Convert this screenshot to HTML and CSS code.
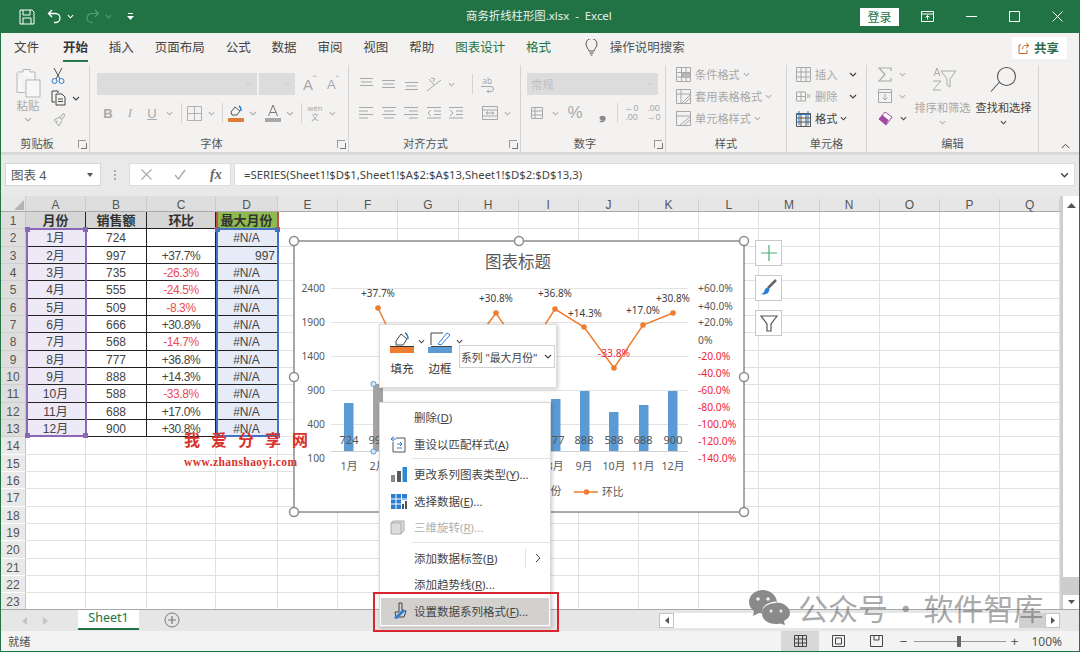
FILE: index.html
```html
<!DOCTYPE html>
<html>
<head>
  <meta charset="utf-8">
  <title>商务折线柱形图.xlsx - Excel</title>
  <link rel="stylesheet" href="styles.css">
</head>
<body>
<svg class="sprite" aria-hidden="true">
  <symbol id="car" viewBox="0 0 8 5"><path d="M1 1l3 3 3-3" fill="none" stroke="currentColor" stroke-width="1.2"/></symbol>
  <symbol id="lines-l" viewBox="0 0 16 14"><path d="M1 1.5h14M1 5h9M1 8.5h14M1 12h9" stroke="currentColor" fill="none"/></symbol>
  <symbol id="lines-c" viewBox="0 0 16 14"><path d="M1 1.5h14M3 5h10M1 8.5h14M3 12h10" stroke="currentColor" fill="none"/></symbol>
  <symbol id="lines-r" viewBox="0 0 16 14"><path d="M1 1.5h14M6 5h9M1 8.5h14M6 12h9" stroke="currentColor" fill="none"/></symbol>
</svg>

<div class="window">
  <header class="titlebar">
    <div class="qat">
      <svg class="q-save" width="16" height="16" viewBox="0 0 16 16" fill="none" stroke="#fff"><path d="M1 1h12l2 2v12H1zM4 1v5h7V1M4 15v-6h8v6"/></svg>
      <svg class="q-undo" width="15" height="15" viewBox="0 0 15 15" fill="none" stroke="#fff" stroke-width="1.3"><path d="M5 1L1.5 4.5 5 8M2 4.5h6.5a4.5 4.5 0 0 1 0 9H7"/></svg>
      <svg class="q-car" width="7" height="5"><use href="#car"/></svg>
      <svg class="q-redo" width="15" height="15" viewBox="0 0 15 15" fill="none" stroke="#5c9a78" stroke-width="1.2"><path d="M10 1l3.5 3.5L10 8M13 4.500H6.500a4.500 4.500 0 0 0 0 9H8"/></svg>
      <svg class="q-car dim" width="7" height="5"><use href="#car"/></svg>
      <svg class="q-more" width="7" height="8" viewBox="0 0 7 8" fill="#fff"><path d="M1 0h5v1H1zM0 3h7L3.500 7z"/></svg>
    </div>
    <div class="doc-title">商务折线柱形图.xlsx&nbsp; - &nbsp;Excel</div>
    <button class="login">登录</button>
    <div class="win-btns">
      <svg width="13" height="11" viewBox="0 0 13 11" fill="none" stroke="#fff"><path d="M.5.500h12v10H.500zM.5 3h12M6.500 8.500V4.500M4.500 6.500l2-2 2 2"/></svg>
      <svg width="11" height="11" viewBox="0 0 11 11" stroke="#fff"><path d="M0 5.500h11"/></svg>
      <svg width="11" height="11" viewBox="0 0 11 11" fill="none" stroke="#fff"><path d="M.5.500h10v10H.500z"/></svg>
      <svg width="11" height="11" viewBox="0 0 11 11" stroke="#fff"><path d="M.5.500l10 10M10.500.500l-10 10"/></svg>
    </div>
  </header>

  <nav class="tabs">
    <a>文件</a>
    <a class="on">开始</a>
    <a>插入</a>
    <a>页面布局</a>
    <a>公式</a>
    <a>数据</a>
    <a>审阅</a>
    <a>视图</a>
    <a>帮助</a>
    <a class="ctx">图表设计</a>
    <a class="ctx">格式</a>
    <svg class="bulb" width="13" height="17" viewBox="0 0 13 17" fill="none" stroke="#555"><path d="M4 12c0-2-3-3.500-3-7a5.500 5.500 0 0 1 11 0c0 3.500-3 5-3 7zM4.500 14h4M5.500 16h2"/></svg>
    <a class="tell">操作说明搜索</a>
    <button class="share">
      <svg width="12" height="12" viewBox="0 0 12 12" fill="none" stroke="#c0692c"><path d="M8 .8l3 2.700-3 2.700M11 3.500H7.500C5.500 3.500 4.500 5 4.500 7M3 3H1v8.500h8V8"/></svg>
      共享
    </button>
  </nav>

  <section class="ribbon">
    <div class="group g-clip">
      <div class="g-body clip">
        <div class="paste">
          <svg width="28" height="30" viewBox="0 0 28 30" fill="none" stroke="#b5b5b5"><path d="M4 4h5V1.500h7V4h5v8M3 4.500v20h8M12 12h14v17H12z" fill="#f7f7f7"/></svg>
          <span>粘贴</span>
          <svg class="car" width="8" height="5"><use href="#car"/></svg>
        </div>
        <div class="clip-tools">
          <svg width="14" height="18" viewBox="0 0 14 18" fill="none"><path d="M3 1l6 11M11 1L5 12" stroke="#555"/><circle cx="3.500" cy="14" r="2.500" stroke="#2b7cd3"/><circle cx="10.500" cy="14" r="2.500" stroke="#2b7cd3"/></svg>
          <div class="clip-copy">
            <svg width="16" height="16" viewBox="0 0 16 16" fill="none" stroke="#444"><path d="M4 12H1V1h6v2M5 4h6l3 3v8H5zM7 9h5M7 11.500h5"/></svg>
            <svg class="car dark" width="8" height="5"><use href="#car"/></svg>
          </div>
          <svg width="16" height="16" viewBox="0 0 16 16" fill="none" stroke="#a8a8a8"><path d="M9 7l3-4.500 2 1.500-3 4.500zM9 6L3 9l5 6 3-5.500M5 11l2-1"/></svg>
        </div>
      </div>
      <div class="g-label">剪贴板<i class="launch"></i></div>
    </div>

    <div class="group g-font">
      <div class="g-body">
        <div class="r1">
          <div class="combo c-name"><svg class="car" width="6" height="4"><use href="#car"/></svg></div>
          <div class="combo c-size"><svg class="car" width="6" height="4"><use href="#car"/></svg></div>
          <span class="bigA">A<sup>ˆ</sup></span>
          <span class="bigA small">A<sup>ˇ</sup></span>
        </div>
        <div class="r2">
          <span class="b">B</span><span class="b ital">I</span><span class="b und">U</span>
          <span class="cw"><svg class="car" width="7" height="5"><use href="#car"/></svg></span>
          <i class="sep"></i>
          <span class="b"><svg width="15" height="15" viewBox="0 0 15 15" fill="none" stroke="#b0b0b0"><path d="M.5.500h14v14H.500zM7.500 1v13M1 7.500h13" /></svg></span>
          <span class="cw"><svg class="car" width="7" height="5"><use href="#car"/></svg></span>
          <i class="sep s2"></i>
          <span class="b b-fill"><svg width="16" height="18" viewBox="0 0 16 18" fill="none"><path d="M3 8l4-5 5 4-3 4H4z" stroke="#555"/><path d="M11 2c2 1 2 3 2 5" stroke="#2b7cd3" stroke-width="1.500"/><path d="M0 14h16v4H0z" fill="#e07b33"/></svg></span>
          <span class="cw dark"><svg class="car" width="8" height="5"><use href="#car"/></svg></span>
          <span class="b b-col"><svg width="16" height="18" viewBox="0 0 16 18" fill="none"><path d="M3.500 12L8 1l4.500 11M5 8.500h6" stroke="#777"/><path d="M0 14h16v4H0z" fill="#a8a8a8"/></svg></span>
          <span class="cw dark"><svg class="car" width="8" height="5"><use href="#car"/></svg></span>
          <i class="sep s3"></i>
          <span class="b b-wen"><small>wén</small><small>文</small></span>
          <span class="cw"><svg class="car" width="7" height="5"><use href="#car"/></svg></span>
        </div>
      </div>
      <div class="g-label">字体<i class="launch"></i></div>
    </div>

    <div class="group g-align">
      <div class="g-body">
        <div class="r1">
          <span class="al"><svg width="15" height="14" viewBox="0 0 15 14" stroke="currentColor"><path d="M1 1.500h13M2 5h11M1 8.500h13"/></svg></span>
          <span class="al"><svg width="15" height="14" viewBox="0 0 15 14" stroke="currentColor"><path d="M1 3.500h13M2 7h11M1 10.500h13"/></svg></span>
          <span class="al"><svg width="15" height="14" viewBox="0 0 15 14" stroke="currentColor"><path d="M1 5.500h13M2 9h11M1 12.500h13"/></svg></span>
          <span class="al"><svg width="16" height="15" viewBox="0 0 16 15" fill="none" stroke="currentColor"><path d="M1 14L15 3M3 2l5 6M5 1l4 1-2 3"/></svg></span>
          <span class="cw"><svg class="car" width="7" height="5"><use href="#car"/></svg></span>
          <i class="sep s-a"></i>
          <span class="al wrap"><small>ab</small><svg width="15" height="8" viewBox="0 0 15 8" fill="none" stroke="currentColor"><path d="M1 1.500h10a2.500 2.500 0 0 1 0 5H7M9 4.500L7 6.500l2 1.500"/></svg></span>
        </div>
        <div class="r2">
          <span class="al"><svg width="16" height="14"><use href="#lines-l"/></svg></span>
          <span class="al"><svg width="16" height="14"><use href="#lines-c"/></svg></span>
          <span class="al"><svg width="16" height="14"><use href="#lines-r"/></svg></span>
          <span class="al"><svg width="16" height="14" viewBox="0 0 16 14" fill="none" stroke="currentColor"><path d="M1 1.500h14M8 5h7M8 8.500h7M1 12h14M5 4L2 7l3 3"/></svg></span>
          <span class="al"><svg width="16" height="14" viewBox="0 0 16 14" fill="none" stroke="currentColor"><path d="M1 1.500h14M8 5h7M8 8.500h7M1 12h14M2 4l3 3-3 3"/></svg></span>
          <i class="sep s-a2"></i>
          <span class="al"><svg width="16" height="14" viewBox="0 0 16 14" fill="none" stroke="currentColor"><path d="M.5.500h15v13H.500zM1 4h14M1 10h14M4 7h8M6 5.500L4 7l2 1.500M10 5.500L12 7l-2 1.500"/></svg></span>
          <span class="cw"><svg class="car" width="7" height="5"><use href="#car"/></svg></span>
        </div>
      </div>
      <div class="g-label">对齐方式<i class="launch"></i></div>
    </div>

    <div class="group g-num">
      <div class="g-body">
        <div class="r1"><div class="combo c-num">常规<svg class="car" width="6" height="4"><use href="#car"/></svg></div></div>
        <div class="r2">
          <span class="al"><svg width="15" height="14" viewBox="0 0 15 14" fill="none" stroke="currentColor"><path d="M.5 1.500h11v11H.500zM1 5h10M1 9h10M4 1v11"/></svg></span>
          <span class="cw"><svg class="car" width="7" height="5"><use href="#car"/></svg></span>
          <span class="pct">%</span>
          <span class="comma">❟</span>
          <i class="sep s-n"></i>
          <span class="dec"><em>←0</em><em>.00</em></span>
          <span class="dec"><em>.00</em><em>→0</em></span>
        </div>
      </div>
      <div class="g-label">数字<i class="launch"></i></div>
    </div>

    <div class="group g-style">
      <div class="g-body stack">
        <div class="row3"><svg width="15" height="15" viewBox="0 0 15 15" fill="none" stroke="#a8a8a8"><path d="M.5.500h14v14H.500zM.5 5.500h14M.5 10h14M5.500 1v13M10 1v13"/><path d="M6 6h8v4H6z" fill="#bbb"/></svg><span>条件格式</span><svg class="car" width="7" height="5"><use href="#car"/></svg></div>
        <div class="row3"><svg width="15" height="15" viewBox="0 0 15 15" fill="none" stroke="#a8a8a8"><path d="M.5.500h14v14H.500zM.5 5h14M5 1v13M6 14l8-8M9 14l5-5"/></svg><span>套用表格格式</span><svg class="car" width="7" height="5"><use href="#car"/></svg></div>
        <div class="row3"><svg width="15" height="15" viewBox="0 0 15 15" fill="none" stroke="#a8a8a8"><path d="M.5.500h14v14H.500zM.5 5h14M4 14L14 6M8 14l6-5"/></svg><span>单元格样式</span><svg class="car" width="7" height="5"><use href="#car"/></svg></div>
      </div>
      <div class="g-label">样式</div>
    </div>

    <div class="group g-cells">
      <div class="g-body stack">
        <div class="row3"><svg width="15" height="15" viewBox="0 0 15 15" fill="none" stroke="#a8a8a8"><path d="M.5.500h14v14H.500zM.5 5h14M.5 10h14M5 1v13M10 1v13"/></svg><span>插入</span><svg class="car dark push" width="8" height="5"><use href="#car"/></svg></div>
        <div class="row3"><svg width="15" height="15" viewBox="0 0 15 15" fill="none" stroke="#a8a8a8"><path d="M.5 3h9v9h-9zM.5 7.500h9M5 3v9M11 5l3 4M14 5l-3 4"/></svg><span>删除</span><svg class="car dark push" width="8" height="5"><use href="#car"/></svg></div>
        <div class="row3 live"><svg width="15" height="17" viewBox="0 0 15 17" fill="none" stroke="#555"><path d="M.5 3.500h14v13H.500zM.5 8h14M.5 12h14M5 3v13M10 3v13"/><path d="M3 1v14M12 1v14M1 4.500h13" stroke="#2b7cd3"/></svg><span>格式</span><svg class="car dark" width="7" height="5"><use href="#car"/></svg></div>
      </div>
      <div class="g-label">单元格</div>
    </div>

    <div class="group g-edit">
      <div class="g-body edit">
        <div class="edit-col">
          <div class="edit-i"><svg width="14" height="15" viewBox="0 0 14 15" fill="none" stroke="#a8a8a8" stroke-width="1.200"><path d="M13 4V1H1l6 6.500L1 14h12v-3"/></svg><svg class="car" width="7" height="5"><use href="#car"/></svg></div>
          <div class="edit-i"><svg width="14" height="14" viewBox="0 0 14 14" fill="none" stroke="#a8a8a8"><path d="M.5.500h13v13H.500zM1 3.500h12M7 5v6M4.500 8.500L7 11l2.500-2.500"/></svg><svg class="car" width="7" height="5"><use href="#car"/></svg></div>
          <div class="edit-i"><svg width="15" height="15" viewBox="0 0 15 15"><path d="M1 8l6-7 7 5-6 8z" fill="#fff" stroke="#a349a4"/><path d="M1 8l3.500-4 6 5L8 14z" fill="#a349a4"/></svg><svg class="car dark" width="7" height="5"><use href="#car"/></svg></div>
        </div>
        <div class="big dim">
          <svg width="28" height="28" viewBox="0 0 28 28" fill="none" stroke="#aaa"><path d="M5 11L8 3l3 8M6 8.500h4M4 16h8l-8 9h8M12 6h15l-6 8v8l-3-2v-6z"/></svg>
          <span>排序和筛选</span>
          <svg class="car" width="7" height="5"><use href="#car"/></svg>
        </div>
        <div class="big">
          <svg width="28" height="28" viewBox="0 0 28 28" fill="none" stroke="#555" stroke-width="1.100"><circle cx="16.500" cy="11.500" r="9"/><path d="M9.500 17L1 26.500"/></svg>
          <span>查找和选择</span>
          <svg class="car dark" width="7" height="5"><use href="#car"/></svg>
        </div>
      </div>
      <div class="g-label">编辑</div>
    </div>
    <svg class="collapse" width="9" height="6" viewBox="0 0 9 6" fill="none" stroke="#444"><path d="M.8 5l3.700-3.700L8.200 5"/></svg>
  </section>

  <div class="formula">
    <div class="namebox">图表 4<svg width="6" height="4" viewBox="0 0 6 4" fill="#555"><path d="M0 0h6L3 4z"/></svg></div>
    <div class="dots"></div>
    <div class="fbtns">
      <svg width="11" height="11" viewBox="0 0 11 11" stroke="#aaa" stroke-width="1.200"><path d="M.5.500l10 10M10.500.500l-10 10"/></svg>
      <svg width="12" height="11" viewBox="0 0 12 11" fill="none" stroke="#aaa" stroke-width="1.400"><path d="M1 6l3.500 4L11 1"/></svg>
      <em class="fx">fx</em>
    </div>
    <div class="finput">=SERIES(Sheet1!$D$1,Sheet1!$A$2:$A$13,Sheet1!$D$2:$D$13,3)<svg width="9" height="6"><use href="#car"/></svg></div>
  </div>

  <div class="sheet">
    <table class="cells">
      <colgroup><col class="w-h"><col class="w-a"><col class="w-b"><col class="w-c"><col class="w-d"></colgroup>
      <thead><tr><th class="corner"><i></i></th><th>A</th><th>B</th><th>C</th><th>D</th></tr></thead>
      <tbody>
        <tr class="hd"><th>1</th><td>月份</td><td>销售额</td><td>环比</td><td class="max">最大月份</td></tr>
        <tr class="d"><th>2</th><td class="a">1月</td><td>724</td><td></td><td class="e">#N/A</td></tr>
        <tr class="d"><th>3</th><td class="a">2月</td><td>997</td><td>+37.7%</td><td class="e rt">997</td></tr>
        <tr class="d"><th>4</th><td class="a">3月</td><td>735</td><td class="neg">-26.3%</td><td class="e">#N/A</td></tr>
        <tr class="d"><th>5</th><td class="a">4月</td><td>555</td><td class="neg">-24.5%</td><td class="e">#N/A</td></tr>
        <tr class="d"><th>6</th><td class="a">5月</td><td>509</td><td class="neg">-8.3%</td><td class="e">#N/A</td></tr>
        <tr class="d"><th>7</th><td class="a">6月</td><td>666</td><td>+30.8%</td><td class="e">#N/A</td></tr>
        <tr class="d"><th>8</th><td class="a">7月</td><td>568</td><td class="neg">-14.7%</td><td class="e">#N/A</td></tr>
        <tr class="d"><th>9</th><td class="a">8月</td><td>777</td><td>+36.8%</td><td class="e">#N/A</td></tr>
        <tr class="d"><th>10</th><td class="a">9月</td><td>888</td><td>+14.3%</td><td class="e">#N/A</td></tr>
        <tr class="d"><th>11</th><td class="a">10月</td><td>588</td><td class="neg">-33.8%</td><td class="e">#N/A</td></tr>
        <tr class="d"><th>12</th><td class="a">11月</td><td>688</td><td>+17.0%</td><td class="e">#N/A</td></tr>
        <tr class="d"><th>13</th><td class="a">12月</td><td>900</td><td>+30.8%</td><td class="e">#N/A</td></tr>
        <tr class="x"><th>14</th><td></td><td></td><td></td><td></td></tr>
        <tr class="x"><th>15</th><td></td><td></td><td></td><td></td></tr>
        <tr class="x"><th>16</th><td></td><td></td><td></td><td></td></tr>
        <tr class="x"><th>17</th><td></td><td></td><td></td><td></td></tr>
        <tr class="x"><th>18</th><td></td><td></td><td></td><td></td></tr>
        <tr class="x"><th>19</th><td></td><td></td><td></td><td></td></tr>
        <tr class="x"><th>20</th><td></td><td></td><td></td><td></td></tr>
        <tr class="x"><th>21</th><td></td><td></td><td></td><td></td></tr>
        <tr class="x"><th>22</th><td></td><td></td><td></td><td></td></tr>
        <tr class="x"><th>23</th><td></td><td></td><td></td><td></td></tr>
      </tbody>
    </table>
    <div class="blank">
      <div class="col-heads"><span>E</span><span>F</span><span>G</span><span>H</span><span>I</span><span>J</span><span>K</span><span>L</span><span>M</span><span>N</span><span>O</span><span>P</span><span>Q</span></div>
      <div class="blank-grid"></div>
    </div>
    <div class="vscroll">
      <div class="vs-up"><svg width="9" height="5" viewBox="0 0 9 5" fill="#555"><path d="M0 5h9L4.500 0z"/></svg></div>
      <div class="vs-thumb"></div>
      <div class="vs-down"><svg width="7" height="4" viewBox="0 0 7 4" fill="#555"><path d="M0 0h7L3.500 4z"/></svg></div>
    </div>
  </div>

  <div class="sheetbar">
    <div class="nav-arrows"><svg width="5" height="8" viewBox="0 0 5 8" fill="#c4c4c4"><path d="M5 0v8L0 4z"/></svg><svg width="5" height="8" viewBox="0 0 5 8" fill="#c4c4c4"><path d="M0 0v8l5-4z"/></svg></div>
    <div class="sheet-tab">Sheet1</div>
    <svg class="add" width="16" height="16" viewBox="0 0 16 16" fill="none" stroke="#777"><circle cx="8" cy="8" r="7"/><path d="M4 8h8M8 4v8" stroke-width="1.200"/></svg>
    <div class="hscroll">
      <span class="hs-left"><svg width="4" height="7" viewBox="0 0 4 7" fill="#555"><path d="M4 0v7L0 3.500z"/></svg></span>
      <span class="hs-thumb"></span>
      <span class="hs-rest"></span>
      <span class="hs-right"><svg width="4" height="7" viewBox="0 0 4 7" fill="#555"><path d="M0 0v7l4-3.500z"/></svg></span>
    </div>
  </div>

  <footer class="status">
    <span>就绪</span>
    <div class="views">
      <span class="on"><svg width="13" height="12" viewBox="0 0 13 12" fill="none" stroke="#444"><path d="M.5.500h12v11H.500zM.5 4h12M.5 8h12M4.500 1v10M8.500 1v10"/></svg></span>
      <span><svg width="13" height="12" viewBox="0 0 13 12" fill="none" stroke="#444"><path d="M.5.500h12v11H.500zM3.500 3h6v6h-6z"/></svg></span>
      <span><svg width="13" height="12" viewBox="0 0 13 12" fill="none" stroke="#444"><path d="M.5.500h12v11H.500zM4 1v4h5V1"/></svg></span>
    </div>
    <div class="zoom"><b>−</b><div class="track"><i></i></div><b>+</b><span>100%</span></div>
  </footer>

  <!-- range outlines sit on top of the cells -->
  <div class="range r-purple"><i class="tl"></i><i class="tr"></i><i class="bl"></i><i class="br"></i></div>
  <div class="range r-blue"><i class="tl"></i><i class="tr"></i><i class="bl"></i><i class="br"></i></div>
  <div class="range r-red"></div>

  <svg class="chart" width="450" height="271" viewBox="294 241 450 271">
    <rect x="294" y="241" width="450" height="271" fill="#fff" stroke="#8c8c8c" stroke-width="1.500"/>
    <text class="c-title" x="518" y="268" text-anchor="middle">图表标题</text>
    <g stroke="#e3e3e3">
      <path d="M331 288.500h357M331 322.500h357M331 356.500h357M331 390.500h357M331 424.500h357"/>
      <path d="M331 451.500h357" stroke="#d0d0d0"/>
    </g>
    <g class="c-ax" text-anchor="end">
      <text x="325" y="292">2400</text><text x="325" y="326">1900</text><text x="325" y="360">1400</text><text x="325" y="394">900</text><text x="325" y="428">400</text><text x="325" y="462">100</text>
    </g>
    <g class="c-ax">
      <text x="698" y="292">+60.0%</text><text x="698" y="310">+40.0%</text><text x="698" y="326">+20.0%</text><text x="698" y="344">0%</text>
      <g class="c-neg"><text x="698" y="360">-20.0%</text><text x="698" y="377">-40.0%</text><text x="698" y="394">-60.0%</text><text x="698" y="411">-80.0%</text><text x="698" y="428">-100.0%</text><text x="698" y="445">-120.0%</text><text x="698" y="462">-140.0%</text></g>
    </g>
    <g fill="#5b9bd5">
      <path d="M344 403h9.500v48H344zM403 403h9.500v48H403zM432 415h9.500v36H432zM462 418h9.500v33H462zM491 407h9.500v44H491zM520 413h9.500v38H520zM551 399h9.500v52H551zM580 391h9.500v60H580zM609 412h9.500v39H609zM639 405h9.500v46H639zM668 391h9.500v60H668z"/>
    </g>
    <path d="M373 384h10v67h-10z" fill="#a3a3a3"/>
    <circle cx="373.500" cy="384" r="2.600" fill="#d6e8f7" stroke="#5b9bd5"/>
    <circle cx="373.500" cy="451.500" r="2.600" fill="#d6e8f7" stroke="#5b9bd5"/>
    <g class="c-lab" text-anchor="middle">
      <text x="349" y="444">724</text><text x="378" y="444">997</text><text x="555" y="444">777</text><text x="584" y="444">888</text><text x="614" y="444">588</text><text x="643" y="444">688</text><text x="673" y="444">900</text>
    </g>
    <g class="c-cat" text-anchor="middle">
      <text x="349" y="470">1月</text><text x="378" y="470">2月</text><text x="555" y="470">8月</text><text x="584" y="470">9月</text><text x="614" y="470">10月</text><text x="643" y="470">11月</text><text x="673" y="470">12月</text>
    </g>
    <polyline points="378,308 408,370 437,362 467,352 496,313 525,356 555,309 584,327 614,368 643,325 673,313" fill="none" stroke="#ed7d31" stroke-width="1.500"/>
    <g fill="#ed7d31">
      <circle cx="378" cy="308" r="2.800"/><circle cx="496" cy="313" r="2.800"/><circle cx="555" cy="309" r="2.800"/><circle cx="584" cy="327" r="2.800"/><circle cx="614" cy="368" r="2.800"/><circle cx="643" cy="325" r="2.800"/><circle cx="673" cy="313" r="2.800"/>
    </g>
    <g class="c-ax dark" text-anchor="middle">
      <text x="378" y="297">+37.7%</text><text x="496" y="302">+30.8%</text><text x="555" y="297">+36.8%</text><text x="585" y="317">+14.3%</text><text x="643" y="314">+17.0%</text><text x="673" y="302">+30.8%</text>
    </g>
    <text class="c-ax c-neg" x="614" y="357" text-anchor="middle">-33.8%</text>
    <text class="c-cat" x="556" y="495" text-anchor="middle">份</text>
    <path d="M574 492h24" stroke="#ed7d31" stroke-width="1.500"/><circle cx="586.500" cy="492" r="2.800" fill="#ed7d31"/>
    <text class="c-cat" x="602" y="496">环比</text>
    <g fill="#fff" stroke="#8c8c8c" stroke-width="1.500">
      <circle cx="294" cy="241" r="4.500"/><circle cx="519" cy="241" r="4.500"/><circle cx="744" cy="241" r="4.500"/><circle cx="294" cy="377" r="4.500"/><circle cx="744" cy="377" r="4.500"/><circle cx="294" cy="512" r="4.500"/><circle cx="519" cy="512" r="4.500"/><circle cx="744" cy="512" r="4.500"/>
    </g>
  </svg>

  <div class="chart-btns">
    <span><svg width="16" height="16" viewBox="0 0 16 16" stroke="#4caf6d" stroke-width="1.200"><path d="M0 8h16M8 0v16"/></svg></span>
    <span><svg width="18" height="18" viewBox="0 0 18 18" fill="none"><path d="M8 9l8-8" stroke="#666" stroke-width="2.500"/><path d="M0 15c4 .5 4-3 5.500-5.500L8.500 8c2 3 .5 9-8.500 7z" fill="#2b7cd3"/></svg></span>
    <span><svg width="18" height="18" viewBox="0 0 18 18" fill="none" stroke="#555" stroke-width="1.200"><path d="M1 2h16l-6 8v7H7v-7z"/></svg></span>
  </div>

  <div class="minibar">
    <div class="mini-btn">
      <div class="mini-ic">
        <svg width="24" height="22" viewBox="0 0 24 22" fill="none"><path d="M6 10l5-7 6 5-4 6H6z" stroke="#444"/><path d="M15 2c2 1 3 3 3 6" stroke="#2b7cd3" stroke-width="1.500"/><path d="M0 15.500h24" stroke="#333"/><path d="M0 16h24v6H0z" fill="#ed7d31"/></svg>
        <svg class="car dark" width="7" height="5"><use href="#car"/></svg>
      </div>
      <span>填充</span>
    </div>
    <div class="mini-btn">
      <div class="mini-ic">
        <svg width="24" height="22" viewBox="0 0 24 22" fill="none"><path d="M3 14V2h12M3 15.500h21" stroke="#444"/><path d="M10 13l9-11 3 2-9 10z" stroke="#2b7cd3"/><path d="M0 16h24v6H0z" fill="#5b9bd5"/></svg>
        <svg class="car dark" width="7" height="5"><use href="#car"/></svg>
      </div>
      <span>边框</span>
    </div>
    <div class="series-sel">系列 "最大月份"<svg width="8" height="5"><use href="#car"/></svg></div>
  </div>

  <div class="menu">
    <div class="m-i"><span class="m-ic"></span><span>删除(<u>D</u>)</span></div>
    <div class="m-i">
      <span class="m-ic"><svg width="18" height="18" viewBox="0 0 18 18" fill="none" stroke="#555"><path d="M6 3h9v14H3V7"/><path d="M1 4h5M4 1.500L1 4l3 2.500M7 9l5 0M10 7l2 2-2 2M7 13h5" stroke="#2b7cd3"/></svg></span>
      <span>重设以匹配样式(<u>A</u>)</span>
    </div>
    <hr>
    <div class="m-i">
      <span class="m-ic"><svg width="18" height="18" viewBox="0 0 18 18"><path d="M1 10h4v7H1z" fill="#8a8a8a"/><path d="M7 6h4v11H7z" fill="#5a5a5a"/><path d="M12.500 2h4.500v15h-4.500z" fill="#2b8ad3"/></svg></span>
      <span>更改系列图表类型(<u>Y</u>)...</span>
    </div>
    <div class="m-i">
      <span class="m-ic"><svg width="18" height="18" viewBox="0 0 18 18"><path d="M1 2h16v15H1z" fill="#2b7cd3"/><path d="M1 7h16M1 12h16M6 2v15M11.500 2v15" stroke="#fff"/><path d="M12 8h5v9h-5z" fill="#fff"/><path d="M12 12h2v5h-2zM15 9h2v8h-2z" fill="#555"/></svg></span>
      <span>选择数据(<u>E</u>)...</span>
    </div>
    <div class="m-i off">
      <span class="m-ic"><svg width="15" height="15" viewBox="0 0 15 15" fill="#ddd" stroke="#aaa"><path d="M1 3h10v11H1zM1 3l2-2h11v10l-3 3"/></svg></span>
      <span>三维旋转(<u>R</u>)...</span>
    </div>
    <hr>
    <div class="m-i sub"><span class="m-ic"></span><span>添加数据标签(<u>B</u>)</span><i></i><svg width="6" height="10" viewBox="0 0 6 10" fill="none" stroke="#444"><path d="M1 1l4 4-4 4"/></svg></div>
    <div class="m-i"><span class="m-ic"></span><span>添加趋势线(<u>R</u>)...</span></div>
    <div class="m-i hot">
      <span class="m-ic"><svg width="18" height="18" viewBox="0 0 18 18" fill="none"><path d="M8 1v9l-4 0 1 5h8l2-6-4-1V1z" stroke="#444"/><path d="M3 16l9-9 2 2-8 8z" fill="#2b7cd3"/></svg></span>
      <span>设置数据系列格式(<u>F</u>)...</span>
    </div>
  </div>
  <div class="callout"></div>

  <div class="mark-red">
    <div class="mark-cn">我爱分享网</div>
    <div class="mark-url">www.zhanshaoyi.com</div>
  </div>

  <div class="mark-wx">
    <svg width="42" height="35" viewBox="0 0 42 35" fill="#8a8a8a"><path d="M14 0C6 0 0 5.500 0 12c0 4 2 7 5 9l-1 5 6-3c1 .3 2 .4 3 .5-1-6 5-12 15-12C27 5 21 0 14 0z"/><path d="M27 13c-8 0-14 4.500-14 10.500S19 34 27 34c2 0 3-.2 4-.5l5 1.500-1-4c4-2 6-5 6-8 0-5.500-6-10.500-14-10.500z"/><g fill="#eee"><circle cx="9" cy="9" r="1.800"/><circle cx="19" cy="9" r="1.800"/><circle cx="22" cy="21" r="1.500"/><circle cx="32" cy="21" r="1.500"/></g></svg>
    <span>公众号 · 软件智库</span>
  </div>
</div>
</body>
</html>
```

FILE: styles.css
```css
* {
  box-sizing: border-box;
}

html, body {
  margin: 0;
  height: 652px;
  overflow: hidden;
}

body {
  font-family: "Noto Sans", "Noto Sans CJK SC", sans-serif;
  font-size: 11.2px;
  color: #444;
}

.sprite {
  display: none;
}

svg {
  display: block;
  flex: none;
}

.window {
  position: relative;
  width: 1080px;
  height: 652px;
  background: #f3f2f1;
  border: 1px solid #217346;
  border-width: 0 1px 1px;
  overflow: hidden;
}

/* title bar */
.titlebar {
  height: 33px;
  background: #217346;
  color: #fff;
  display: flex;
  align-items: center;
  position: relative;
}

.qat {
  display: flex;
  align-items: center;
  padding-left: 18px;
}

.q-undo { margin-left: 12px; }
.q-car { margin-left: 5px; color: #fff; }
.q-car.dim { color: #5c9a78; }
.q-redo { margin-left: 11px; }
.q-more { margin-left: 15px; }

.doc-title {
  position: absolute;
  left: 465px;
  top: 8px;
  font-size: 11.4px;
  line-height: 16px;
  white-space: nowrap;
  color: #e8f1ec;
}

.login {
  margin-left: auto;
  width: 39px;
  height: 18px;
  padding: 0;
  border: 0;
  background: #fff;
  color: #217346;
  font: 12px "Noto Sans CJK SC", sans-serif;
}

.win-btns {
  display: flex;
  align-items: center;
  gap: 32px;
  margin-left: 22px;
  padding-right: 16px;
}

/* tabs */
.tabs {
  height: 29px;
  display: flex;
  align-items: center;
  gap: 20.9px;
  padding-left: 13px;
  font-size: 12.5px;
  color: #444;
  background: #f3f2f1;
}

.tabs a {
  position: relative;
  line-height: 26px;
  white-space: nowrap;
}

.tabs .on {
  font-weight: 700;
  color: #333;
  margin-left: 3px;
}

.tabs .on::after {
  content: "";
  position: absolute;
  left: 0;
  right: 0;
  bottom: -1px;
  height: 2px;
  background: #217346;
}

.tabs .ctx { color: #217346; }
.tabs .bulb { margin-left: 13px; }
.tabs .tell { margin-left: -9px; color: #555; }

.share {
  margin-left: auto;
  margin-right: 12px;
  width: 55px;
  height: 22px;
  padding: 0 0 0 6px;
  border: 0;
  background: #fff;
  color: #2f6b4e;
  display: flex;
  align-items: center;
  gap: 4px;
  font: 700 12.5px "Noto Sans CJK SC", sans-serif;
}

/* ribbon */
.ribbon {
  height: 91px;
  display: flex;
  padding-top: 3px;
  position: relative;
  background: #f3f2f1;
  color: #a8a8a8;
  border-bottom: 1px solid #d8d8d8;
  box-shadow: 0 1px 2px #ccc;
  z-index: 1;
}

.group {
  display: flex;
  flex-direction: column;
  border-right: 1px solid #d4d4d4;
  height: 87px;
}

.g-clip { width: 89px; }
.g-font { width: 259px; }
.g-align { width: 172px; }
.g-num { width: 145px; }
.g-style { width: 121px; }
.g-cells { width: 80px; }
.g-edit { width: 172px; }

.g-body {
  flex: 1;
  min-height: 0;
}

.g-label {
  height: 17px;
  line-height: 17px;
  text-align: center;
  color: #555;
  position: relative;
}

.g-clip .g-label { padding-right: 16px; }
.g-font .g-label { padding-right: 15px; }
.g-align .g-label { padding-right: 18px; }
.g-num .g-label { padding-right: 16px; }

.launch {
  position: absolute;
  right: 3px;
  top: 5px;
  width: 8px;
  height: 8px;
  border: 1px solid #999;
  border-width: 1px 0 0 1px;
}

.launch::after {
  content: "";
  position: absolute;
  left: 2px;
  top: 2px;
  width: 5px;
  height: 5px;
  border: 1px solid #777;
  border-width: 0 1px 1px 0;
}

.car {
  color: #b0b0b0;
}

.car.dark, .cw.dark {
  color: #444;
}

/* clipboard */
.clip {
  display: flex;
  padding: 3px 0 0 4px;
}

.paste {
  width: 46px;
  display: flex;
  flex-direction: column;
  align-items: center;
}

.paste span {
  line-height: 15px;
  font-size: 11.4px;
}

.paste .car {
  margin-top: 4px;
}

.clip-tools {
  display: flex;
  flex-direction: column;
  gap: 5px;
  margin-top: -1px;
}

.clip-copy {
  display: flex;
  align-items: center;
  gap: 5px;
}

/* rows shared by font, align and number */
.r1, .r2 {
  height: 22px;
  display: flex;
  align-items: center;
}

.r1 { margin-top: 8px; }
.r2 { margin-top: 7px; }

.g-font .r1, .g-font .r2 { padding-left: 7px; }
.g-align .r1, .g-align .r2 { padding-left: 6px; }
.g-num .r1, .g-num .r2 { padding-left: 6px; }

.combo {
  height: 22px;
  background: #dcdcdc;
  display: flex;
  align-items: center;
  justify-content: flex-end;
  padding-right: 5px;
}

.combo .car {
  color: #c4c4c4;
}

.c-name { width: 160px; }
.c-size { width: 36px; margin-left: 2px; }
.c-num {
  width: 131px;
  justify-content: space-between;
  padding-left: 4px;
  color: #c0c0c0;
}

.bigA {
  margin-left: 8px;
  font: 15px "Liberation Sans", sans-serif;
  width: 18px;
}

.bigA.small {
  font-size: 13px;
  margin-left: 6px;
}

.bigA sup {
  font-size: 10px;
  line-height: 0;
}

.b, .al {
  width: 22px;
  flex: none;
  display: flex;
  justify-content: center;
  align-items: center;
  font: 700 13px "Liberation Sans", sans-serif;
}

.al {
  width: 22.5px;
}

.ital {
  font: italic 13px "Liberation Serif", serif;
}

.und {
  font-weight: 400;
  text-decoration: underline;
}

.cw {
  width: 12px;
  flex: none;
  display: flex;
  justify-content: center;
}

.sep {
  width: 1px;
  height: 20px;
  background: #d4d4d4;
  margin: 0 1px 0 6px;
  flex: none;
}

.s2 { margin: 0 2px 0 5px; }
.s3 { margin: 0 2px 0 5px; }
.b-col { margin-left: 3px; }

.b-wen {
  flex-direction: column;
  font: 9px/9px "Noto Sans", "Noto Sans CJK SC", sans-serif;
}

.s-a { margin: 0 3px 0 15px; }
.s-a2 { margin: 0 3px 0 7px; height: 0; }

.wrap {
  flex-direction: column;
  font: 10px/9px "Noto Sans", sans-serif;
}

.pct {
  width: 24px;
  margin-left: 6px;
  font: 17px "Liberation Sans", sans-serif;
}

.comma {
  width: 22px;
  text-align: center;
  font: 700 18px "DejaVu Sans", sans-serif;
  color: #888;
}

.s-n { margin: 0 3px 0 3px; }

.dec {
  width: 22px;
  display: flex;
  flex-direction: column;
  align-items: center;
  font: 9px/9px "Liberation Sans", sans-serif;
}

.dec em {
  font-style: normal;
}

/* three row groups */
.stack {
  display: flex;
  flex-direction: column;
  padding: 0 10px;
  margin-top: -2px;
}

.row3 {
  height: 22px;
  display: flex;
  align-items: center;
  gap: 3px;
  white-space: nowrap;
}

.row3 span {
  margin-left: 1px;
}

.row3 .push {
  margin-left: auto;
}

.g-cells .stack {
  padding: 0 9px;
}

.row3.live {
  color: #444;
}

.row3.live .car {
  color: #444;
}

.edit {
  display: flex;
  padding-left: 11px;
  margin-top: -2px;
}

.edit-col {
  width: 34px;
  display: flex;
  flex-direction: column;
}

.edit-i {
  height: 22px;
  display: flex;
  align-items: center;
  gap: 7px;
}

.big {
  width: 61px;
  display: flex;
  flex-direction: column;
  align-items: center;
  color: #444;
  white-space: nowrap;
  padding-top: 2px;
}

.big.dim {
  color: #a8a8a8;
}

.big span {
  line-height: 16px;
  margin-top: 7px;
}

.big .car {
  margin-top: 4px;
}

.collapse {
  position: absolute;
  right: 9px;
  top: 81px;
}

/* formula bar */
.formula {
  height: 43px;
  display: flex;
  padding: 10px 4px;
  background: #e9e9e9;
  color: #555;
}

.namebox {
  width: 96px;
  background: #fff;
  border: 1px solid #d4d4d4;
  display: flex;
  justify-content: space-between;
  align-items: center;
  padding: 0 7px 0 5px;
  font-size: 12.5px;
}

.dots {
  width: 2px;
  height: 10px;
  margin: 7px 13px 0 13px;
  border-top: 2px dotted #aaa;
  border-bottom: 2px dotted #aaa;
  background: linear-gradient(#aaa, #aaa) center / 2px 2px no-repeat;
}

.fbtns {
  width: 102px;
  background: #fff;
  border: 1px solid #dcdcdc;
  display: flex;
  align-items: center;
  padding-left: 11px;
  gap: 22px;
}

.fx {
  font: italic 700 14px "Liberation Serif", serif;
  color: #666;
  margin-left: 2px;
}

.finput {
  flex: 1;
  margin-left: 3px;
  background: #fff;
  border: 1px solid #dcdcdc;
  display: flex;
  align-items: center;
  justify-content: space-between;
  padding: 0 5px 0 9px;
  font-size: 11.3px;
  color: #444;
}

/* sheet */
.sheet {
  height: 413px;
  display: flex;
  background: #fff;
  overflow: hidden;
}

.cells {
  width: 277px;
  flex: none;
  table-layout: fixed;
  border-collapse: separate;
  border-spacing: 0;
  font: 12px "Liberation Sans", "Noto Sans CJK SC", sans-serif;
  color: #444;
  align-self: flex-start;
}

.w-h { width: 25px; }
.w-a { width: 60px; }
.w-b { width: 61px; }
.w-c { width: 69px; }
.w-d { width: 62px; }

.cells thead th {
  height: 16px;
  padding: 3px 0 0;
  font-weight: 400;
  background: #dedede;
  border-right: 1px solid #ccc;
  border-bottom: 1px solid #aaa;
  color: #555;
  line-height: 12px;
}

.cells .corner {
  background: #e6e6e6;
  position: relative;
}

.corner i {
  position: absolute;
  right: 1px;
  bottom: 1px;
  width: 0;
  height: 0;
  border: 5px solid #b4b4b4;
  border-top-color: transparent;
  border-left-color: transparent;
}

.cells tbody th {
  height: 17.33px;
  padding: 2px 0 0;
  font-weight: 400;
  background: #dedede;
  border-right: 1px solid #c6c6c6;
  border-bottom: 1px solid #cfcfcf;
  color: #555;
  line-height: 14px;
}

.cells tbody td {
  height: 17.33px;
  padding: 2px 0 0;
  text-align: center;
  line-height: 14px;
  border-right: 1px solid #e1e1e1;
  border-bottom: 1px solid #e1e1e1;
}

.cells td:nth-child(4) {
  letter-spacing: -.4px;
}

.cells .x th {
  background: #e9e9e9;
  border-bottom-color: #fff;
}

.hd td {
  background: #d6d6d6;
  font-weight: 700;
  font-size: 13px;
  color: #333;
}

.cells .hd td,
.cells .d td {
  border-right-color: #222;
  border-bottom-color: #222;
}

.hd .max {
  background: #8dbb50;
}

.cells .a { background: #ede9f6; }
.cells .e { background: #e6ecf7; }
.cells .rt { text-align: right; padding-right: 2px; }
.neg { color: #ea4a55; }

.blank {
  flex: none;
  width: 782.2px;
}

.col-heads {
  display: flex;
  height: 16px;
  padding-top: 3px;
  background: #e6e6e6;
  border-bottom: 1px solid #aaa;
  font: 12px/12px "Liberation Sans", sans-serif;
  color: #555;
}

.col-heads span {
  flex: 1;
  text-align: center;
  border-right: 1px solid #d0d0d0;
}

.blank-grid {
  height: 397px;
  background:
    repeating-linear-gradient(to right, transparent 0 59.17px, #e1e1e1 59.17px 60.17px),
    repeating-linear-gradient(to bottom, transparent 0 16.33px, #e1e1e1 16.33px 17.33px);
}

.vscroll {
  flex: 1;
  display: flex;
  flex-direction: column;
  background: #cdcdcd;
  padding-left: 2px;
  border-left: 1px solid #d4d4d4;
}

.vs-up {
  height: 16px;
  padding-top: 2px;
  background: #fff;
  display: flex;
  align-items: center;
  justify-content: center;
}

.vs-thumb {
  height: 365px;
  background: #fff;
}

.vs-down {
  margin-top: auto;
  height: 14px;
  background: #fff;
  display: flex;
  align-items: center;
  justify-content: center;
}

.sheetbar {
  height: 22px;
  display: flex;
  background: #e6e6e6;
  border-top: 1px solid #a8a8a8;
}

.nav-arrows {
  width: 77px;
  display: flex;
  align-items: center;
  gap: 16px;
  padding-left: 21px;
}

.sheet-tab {
  width: 61px;
  height: 20px;
  background: #fff;
  border-bottom: 2px solid #217346;
  text-align: center;
  color: #217346;
  font: 12.5px/16px "Noto Sans", sans-serif;
}

.add {
  margin: 2px 0 0 25px;
}

.hscroll {
  display: flex;
  width: 401px;
  height: 15px;
  margin: 3px 19px 0 auto;
}

.hscroll span {
  display: flex;
  align-items: center;
  justify-content: center;
}

.hs-left, .hs-right {
  width: 15px;
  background: #fff;
  border: 1px solid #c4c4c4;
}

.hs-thumb {
  flex: 1;
  background: #fff;
}

.hs-rest {
  width: 26px;
  background: #d0d0d0;
}

.status {
  height: 20px;
  display: flex;
  align-items: center;
  padding-left: 7px;
  background: #f3f3f3;
  font-size: 11.3px;
  color: #555;
}

.views {
  margin-left: auto;
  display: flex;
  height: 100%;
}

.views span {
  width: 38px;
  display: flex;
  align-items: center;
  justify-content: center;
}

.views .on {
  background: #d8d8d8;
}

.zoom {
  display: flex;
  align-items: center;
  margin: 0 17px 0 4px;
}

.zoom b {
  width: 8px;
  text-align: center;
  font: 13px "Liberation Sans", sans-serif;
}

.track {
  width: 92px;
  height: 1px;
  margin: 0 4px 0 7px;
  background: #999;
  position: relative;
}

.track i {
  position: absolute;
  left: 43px;
  top: -5px;
  width: 4px;
  height: 11px;
  background: #666;
}

.zoom span {
  margin-left: 13px;
  font: 12px "Noto Sans", sans-serif;
}

/* things floating over the cells */
.range {
  position: absolute;
  left: 25px;
  top: 228px;
  width: 61px;
  height: 209px;
  border: 2px solid #8a68b5;
  pointer-events: none;
}

.range i {
  position: absolute;
  width: 5px;
  height: 5px;
  background: #8a68b5;
}

.r-blue {
  left: 215px;
  width: 63px;
  border-color: #4472c4;
}

.r-blue i {
  background: #4472c4;
}

.range .tl { left: -3px; top: -3px; }
.range .tr { right: -3px; top: -3px; }
.range .bl { left: -3px; bottom: -3px; }
.range .br { right: -3px; bottom: -3px; }

.r-red {
  left: 215px;
  top: 212px;
  width: 63px;
  height: 17px;
  border-color: #c0504d;
  border-width: 0 2px;
  border-top: 0;
}

.chart {
  position: absolute;
  left: 293px;
  top: 241px;
  overflow: visible;
}

.c-title {
  font-size: 16.5px;
  fill: #595959;
}

.c-ax {
  font-size: 10.3px;
  fill: #595959;
}

.c-cat {
  font-size: 10.8px;
  fill: #595959;
}

.c-ax.dark { fill: #404040; font-size: 10px; }
.c-lab { font-size: 11px; fill: #555; }
.c-neg { fill: #f0253a; }

.chart-btns {
  position: absolute;
  left: 754px;
  top: 240px;
  display: flex;
  flex-direction: column;
  gap: 9px;
}

.chart-btns span {
  width: 27px;
  height: 26px;
  background: #fff;
  border: 1px solid #c8c8c8;
  display: flex;
  align-items: center;
  justify-content: center;
}

.minibar {
  position: absolute;
  left: 378px;
  top: 324px;
  width: 178px;
  height: 64px;
  background: #fff;
  border: 1px solid #dcdcdc;
  box-shadow: 1px 1px 4px rgba(0, 0, 0, .22);
  display: flex;
  padding: 6px 0 0 10px;
  gap: 14px;
  color: #333;
}

.mini-btn {
  display: flex;
  flex-direction: column;
  width: 24px;
  gap: 7px;
  align-items: center;
  font-size: 11.5px;
}

.mini-ic {
  display: flex;
  align-items: flex-start;
  gap: 4px;
  margin-right: -11px;
}

.mini-ic .car {
  margin-top: 8px;
}

.series-sel {
  position: absolute;
  left: 79px;
  top: 20px;
  width: 96px;
  height: 23px;
  border: 1px solid #d0d0d0;
  display: flex;
  align-items: center;
  justify-content: space-between;
  padding: 0 2px 0 1px;
  white-space: nowrap;
  font-size: 10.8px;
  color: #444;
}

.menu {
  position: absolute;
  left: 378px;
  top: 402px;
  width: 172px;
  height: 225px;
  background: #fff;
  border: 1px solid #d8d8d8;
  box-shadow: 1px 1px 4px rgba(0, 0, 0, .22);
  padding-top: 1px;
  font-size: 11.5px;
  color: #444;
}

.m-i {
  height: 26.5px;
  display: flex;
  align-items: center;
  white-space: nowrap;
}

.m-ic {
  width: 34px;
  padding-left: 10px;
  flex: none;
}

.menu hr {
  margin: 1px 0 2px 32px;
  border: 0;
  border-top: 1px solid #e3e3e3;
}

.m-i.off {
  color: #b0b0b0;
}

.sub i {
  width: 1px;
  height: 18px;
  background: #e3e3e3;
  margin: 0 9px 0 auto;
}

.sub svg {
  margin-right: 9px;
}

.m-i.hot {
  background: #d2d1ce;
  margin: 0 1px;
  height: 27px;
}

.m-i.hot .m-ic {
  width: 33px;
}

.callout {
  position: absolute;
  left: 372px;
  top: 592px;
  width: 186px;
  height: 40px;
  border: 2.5px solid #d92530;
}

.mark-red {
  position: absolute;
  left: 183px;
  top: 429px;
  color: #d9322c;
  font-weight: 700;
}

.mark-cn {
  font: 700 16px/20px "Noto Sans CJK SC", sans-serif;
  letter-spacing: 11px;
  white-space: nowrap;
}

.mark-url {
  font: 700 11.5px/14px "Liberation Serif", serif;
  margin-top: 6px;
  letter-spacing: .45px;
  white-space: nowrap;
}

.mark-wx {
  position: absolute;
  left: 748px;
  top: 589px;
  display: flex;
  align-items: center;
  gap: 7px;
  color: rgba(95, 95, 95, .55);
  font: 30px/36px "Noto Sans CJK SC", sans-serif;
  word-spacing: -4px;
  white-space: nowrap;
}
```
